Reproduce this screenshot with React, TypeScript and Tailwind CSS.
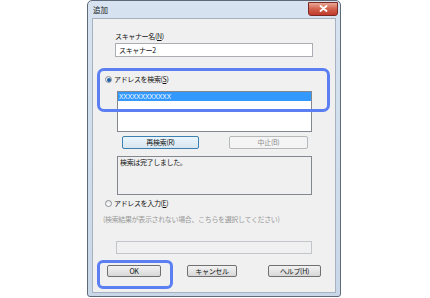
import React from 'react';

const jp = "font-['Noto_Sans_CJK_JP','Noto_Sans',sans-serif]";

function Radio({ checked }: { checked?: boolean }) {
  return (
    <span className="w-[7px] h-[7px] rounded-full border border-[#8a9098] bg-gradient-to-b from-[#e6e6e6] to-[#ffffff] flex items-center justify-center shrink-0">
      {checked && <span className="w-[4px] h-[4px] rounded-full bg-[#1f5fa8]" />}
    </span>
  );
}

function Btn({ label, w, disabled, focus }: { label: string; w: string; disabled?: boolean; focus?: boolean }) {
  const base = 'h-full flex items-center justify-center rounded-[2px] border text-[7px] tracking-[-0.3px] leading-none';
  const look = disabled
    ? 'border-[#b5b9bc] bg-[#f4f4f4] text-[#8d8d8d]'
    : focus
      ? 'border-[#3c7fb1] bg-gradient-to-b from-[#eaf6fd] to-[#d9e6ef] text-[#111]'
      : 'border-[#707070] bg-gradient-to-b from-[#f2f2f2] to-[#d8d8d8] text-[#111]';
  return <div className={`${base} ${look} ${w}`}>{label}</div>;
}

export default function App() {
  return (
    <div className={`relative w-[430px] h-[298px] bg-white ${jp}`}>
      {/* dialog window */}
      <div className="ml-[87px] w-[254px] h-[297px] flex flex-col rounded-t-[5px] rounded-b-[3px] border border-[#5f6a78] bg-gradient-to-b from-[#d7e3f0] to-[#c9d8e9]">
        {/* title bar */}
        <div className="h-[17px] flex items-center justify-between pl-[5px] pr-[2px]">
          <span className="text-[7.5px] text-[#1b1b1b] leading-none">追加</span>
          <div className="w-[30px] h-[14px] -mt-[2px] rounded-b-[3px] border border-[#7a2a22] bg-gradient-to-b from-[#e9a797] via-[#d2604c] to-[#c0392b] flex items-center justify-center">
            <svg width="9" height="7" viewBox="0 0 9 7">
              <path d="M1.5 1 L7.5 6 M7.5 1 L1.5 6" stroke="#ffffff" strokeWidth="1.8" strokeLinecap="round" />
            </svg>
          </div>
        </div>

        {/* client area */}
        <div className="mx-[4px] h-[275px] border border-[#a8b2be] bg-[#f0f0f0] text-[7px] leading-[9px] tracking-[-0.35px] text-[#111] flex flex-col">
          <div className="ml-[22px] mt-[13px]">スキャナー名(<u>N</u>)</div>
          <div className="ml-[22px] mt-[2px] w-[198px] h-[14px] border border-[#abadb3] bg-white flex items-center pl-[3px]">
            スキャナー2
          </div>

          <div className="ml-[12px] mt-[18px] flex items-center gap-[2px]">
            <Radio checked />
            <span>アドレスを検索(<u>S</u>)</span>
          </div>
          <div className="ml-[24px] mt-[7px] w-[195px] h-[41px] border border-[#828790] bg-white">
            <div className="h-[9px] bg-[#3399ff] text-white font-['Liberation_Sans',sans-serif] tracking-[0px] text-[6.5px] leading-[9px] pl-[1px]">
              XXXXXXXXXXXX
            </div>
          </div>

          <div className="mt-[4px] h-[13px] flex">
            <div className="ml-[29px]">
              <Btn label="再検索(R)" w="w-[77px]" focus />
            </div>
            <div className="ml-[30px]">
              <Btn label="中止(B)" w="w-[79px]" disabled />
            </div>
          </div>

          <div className="ml-[24px] mt-[7px] w-[195px] h-[39px] border border-[#828790] bg-[#f0f0f0] pl-[2px] pt-[1px]">
            検索は完了しました。
          </div>

          <div className="ml-[12px] mt-[4px] flex items-center gap-[2px]">
            <Radio />
            <span>アドレスを入力(<u>E</u>)</span>
          </div>
          <div className="ml-[10px] mt-[7px] text-[#9a9a9a]">
            (検索結果が表示されない場合、こちらを選択してください)
          </div>

          <div className="ml-[23px] mt-[17px] w-[196px] h-[13px] border border-[#c2c5ca] bg-[#f0f0f0]" />

          <div className="mt-[11px] h-[12px] flex">
            <div className="ml-[14px]">
              <Btn label="OK" w="w-[54px]" />
            </div>
            <div className="ml-[26px]">
              <Btn label="キャンセル" w="w-[50px]" />
            </div>
            <div className="ml-[31px]">
              <Btn label="ヘルプ(H)" w="w-[53px]" />
            </div>
          </div>
        </div>
      </div>

      {/* callout highlights */}
      <div className="absolute left-[97px] top-[68px] w-[233px] h-[44px] rounded-[7px] border-[3px] border-[#5b7ef3]" />
      <div className="absolute left-[97px] top-[260px] w-[76px] h-[29px] rounded-[6px] border-[3px] border-[#5b7ef3]" />
    </div>
  );
}
